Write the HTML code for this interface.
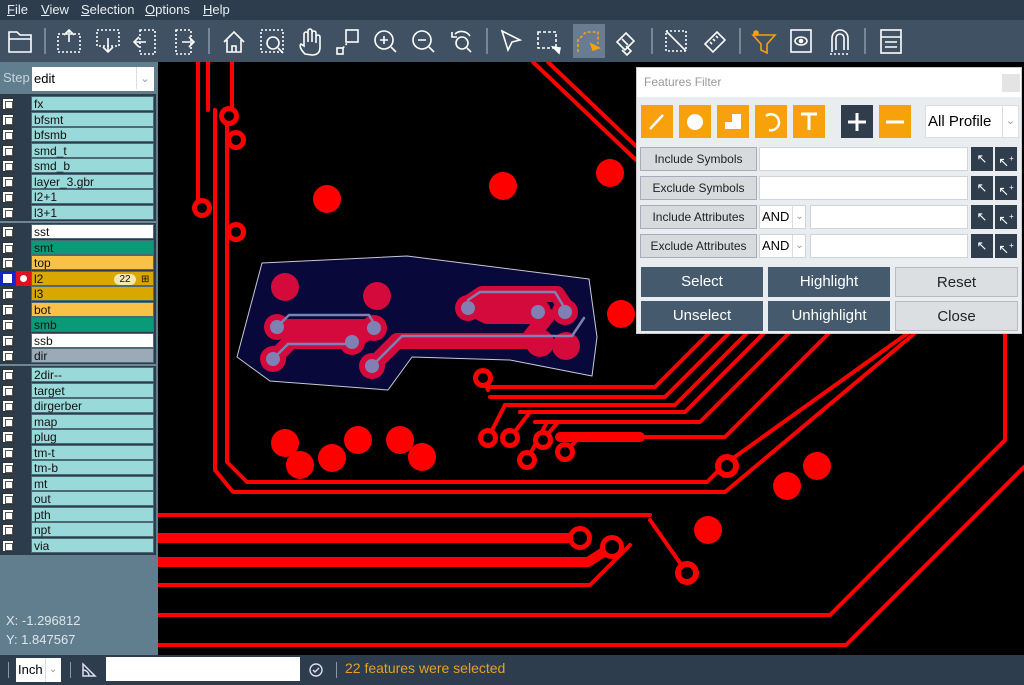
<!DOCTYPE html>
<html><head><meta charset="utf-8"><style>
*{margin:0;padding:0;box-sizing:border-box}
body{width:1024px;height:685px;overflow:hidden;background:#000;font-family:"Liberation Sans",sans-serif;position:relative}
.abs{position:absolute}
#menu{left:0;top:0;width:1024px;height:20px;background:#2e3d4e;color:#e8eef2;font-size:13px}
#menu span{position:absolute;top:2px}
#menu u{text-decoration:underline}
#tb{left:0;top:20px;width:1024px;height:42px;background:#3f5163}
#left{left:0;top:62px;width:158px;height:593px;background:#617e8e}
#layers{left:0;top:94px;width:156px;height:461px;background:#2d3c4a}
.row{position:absolute;left:0;width:156px;height:15.5px}
.cb{position:absolute;left:2px;top:2px;width:12px;height:12px;background:#fff;border:1px solid #333}
.cb:after{content:"";position:absolute;left:2px;top:2px;width:6px;height:6px;border:1px solid #555}
.lb{position:absolute;left:31px;top:0;width:123px;height:15px;font-size:12px;line-height:15px;padding-left:2px;color:#111;border:1px solid #4a6a78}
#status{left:0;top:655px;width:1024px;height:30px;background:#2e3d4e}
#dlg{left:636px;top:67px;width:386px;height:267px;background:#e9edf0;border:1px solid #c8ccd0}
.ob{position:absolute;top:37px;width:32px;height:33px;background:#f7a20c}
.lbtn{position:absolute;left:3px;width:117px;height:24px;background:#d8dbde;border:1px solid #aab;font-size:12px;text-align:center;line-height:22px;color:#222}
.inp{position:absolute;height:24px;background:#fff;border:1px solid #d0d4d8}
.ib{position:absolute;width:22px;height:24px;background:#2f3d4c;color:#fff;font-size:13px;text-align:center;line-height:24px}
.bb{position:absolute;height:30px;font-size:15px;text-align:center;line-height:30px}
.dk{background:#465a6e;color:#fff}
.lt{background:#dcdfe2;color:#222;border:1px solid #bbb}
</style></head><body>
<div id="menu" class="abs">
<span style="left:7px"><u>F</u>ile</span><span style="left:41px"><u>V</u>iew</span><span style="left:81px"><u>S</u>election</span><span style="left:145px"><u>O</u>ptions</span><span style="left:203px"><u>H</u>elp</span>
</div>
<div id="tb" class="abs">
<div class="abs" style="left:573px;top:4px;width:32px;height:34px;background:#6a7d90"></div>
<svg class="abs" style="left:0;top:0" width="1024" height="42" fill="none" stroke="#fff" stroke-width="1.6">
<g stroke="#8596a6"><line x1="45" y1="8" x2="45" y2="34"/><line x1="209" y1="8" x2="209" y2="34"/><line x1="487" y1="8" x2="487" y2="34"/><line x1="652" y1="8" x2="652" y2="34"/><line x1="740" y1="8" x2="740" y2="34"/><line x1="865" y1="8" x2="865" y2="34"/></g>
<path d="M9 12h8l3 3h11v17H9z M9 19h22"/>
<g stroke-dasharray="2 2"><rect x="58" y="14" width="22" height="18"/><rect x="97" y="10" width="22" height="16"/><rect x="140" y="10" width="15" height="24"/><rect x="176" y="10" width="15" height="24"/><rect x="261" y="10" width="22" height="22"/></g>
<path d="M69 22v-12m-5 5l5-5 5 5"/><path d="M108 18v14m-5-5l5 5 5-5"/><path d="M146 22h-12m5-5l-5 5 5 5"/><path d="M182 22h12m-5-5l5 5-5 5"/>
<path d="M224 22l10-10 10 10M227 20v12h14V20M232 32v-6h4v6"/>
<circle cx="273" cy="23" r="6"/><path d="M278 28l5 5"/>
<path d="M305 34c-4-4-6-8-4-10l3 2V14a2 2 0 014 0v8-11a2 2 0 014 0v11-9a2 2 0 014 0v10-6a2 2 0 014 0v10c0 6-3 8-8 8z"/>
<rect x="346" y="10" width="12" height="12"/><rect x="337" y="28" width="6" height="6"/><path d="M343 28l5-6" stroke-dasharray="2 2"/>
<circle cx="384" cy="20" r="9"/><path d="M391 27l5 5M380 20h8M384 16v8"/>
<circle cx="422" cy="20" r="9"/><path d="M429 27l5 5M418 20h8"/>
<path d="M455 14a10 10 0 0115 2"/><circle cx="462" cy="23" r="6"/><path d="M467 28l4 4M452 12v5h5"/>
<path d="M502 11l18 9-8 2-4 8z"/>
<rect x="538" y="12" width="18" height="16" stroke-dasharray="3 2"/><path d="M553 27l6 6 1-5z" fill="#fff"/>
<g stroke="#f7a20c"><path d="M578 32V20l8-8h12v12" stroke-dasharray="3 2"/><path d="M591 24l8 4-6 2z" fill="#f7a20c"/></g>
<path d="M617 22l9-9 8 8-9 9zM622 19l6 6M626 26l5 5-4 4-5-5"/>
<rect x="666" y="11" width="20" height="20" stroke-dasharray="2 2"/><path d="M666 11l20 20"/>
<path d="M705 24l12-12 8 8-12 12zM710 22l2 2M713 19l2 2M716 16l2 2"/>
<g stroke="#f7a20c"><path d="M753 15h22l-8 9v9l-6-3v-6z"/><circle cx="756" cy="13" r="2" fill="#f7a20c"/></g>
<rect x="791" y="10" width="20" height="22"/><ellipse cx="801" cy="21" rx="6" ry="4"/><circle cx="801" cy="21" r="1.5" fill="#fff"/>
<path d="M832 32V18a8 8 0 0116 0v12M836 30V18a4 4 0 018 0v12" /><path d="M830 34h20" stroke-dasharray="2 2"/>
<rect x="881" y="10" width="20" height="23"/><path d="M881 17h20M885 22h12M885 27h12"/>
</svg>
</div>
<div id="left" class="abs">
<div class="abs" style="left:0;top:2px;width:32px;height:26px;color:#c8d4dc;font-size:13px;line-height:28px;padding-left:3px">Step</div>
<div class="abs" style="left:32px;top:5px;width:122px;height:24px;background:#fff;font-size:13px;line-height:24px;padding-left:2px">edit<span style="position:absolute;left:104px;top:0;width:17px;height:22px;border-left:1px solid #ddd;color:#999;text-align:center;font-size:11px">&#8964;</span></div>
<div class="abs" style="left:6px;top:549px;color:#dde6ea;font-size:13px;line-height:19px">X: -1.296812<br>Y: 1.847567</div>
</div>
<div id="layers" class="abs">
<div class="row" style="top:2px"><div class="cb"></div><div class="lb" style="background:#9ad9da">fx</div></div>
<div class="row" style="top:17.5px"><div class="cb"></div><div class="lb" style="background:#9ad9da">bfsmt</div></div>
<div class="row" style="top:33px"><div class="cb"></div><div class="lb" style="background:#9ad9da">bfsmb</div></div>
<div class="row" style="top:48.5px"><div class="cb"></div><div class="lb" style="background:#9ad9da">smd_t</div></div>
<div class="row" style="top:64px"><div class="cb"></div><div class="lb" style="background:#9ad9da">smd_b</div></div>
<div class="row" style="top:79.5px"><div class="cb"></div><div class="lb" style="background:#9ad9da">layer_3.gbr</div></div>
<div class="row" style="top:95px"><div class="cb"></div><div class="lb" style="background:#9ad9da">l2+1</div></div>
<div class="row" style="top:110.5px"><div class="cb"></div><div class="lb" style="background:#9ad9da">l3+1</div></div>
<div class="abs" style="left:0;top:127px;width:156px;height:2px;background:#6f8795"></div>
<div class="row" style="top:130px"><div class="cb"></div><div class="lb" style="background:#fff">sst</div></div>
<div class="row" style="top:145.5px"><div class="cb"></div><div class="lb" style="background:#0b9a78">smt</div></div>
<div class="row" style="top:161px"><div class="cb"></div><div class="lb" style="background:#f9c146">top</div></div>
<div class="row" style="top:176.5px"><div class="abs" style="left:0;top:0;width:15px;height:15px;background:#1228c0"></div><div class="abs" style="left:3px;top:3px;width:9px;height:9px;background:#fff"></div><div class="abs" style="left:16px;top:0;width:15px;height:15px;background:#e01020"></div><div class="abs" style="left:20px;top:4px;width:7px;height:7px;border-radius:50%;background:#fff"></div><div class="lb" style="background:#d9a800">l2<span style="position:absolute;left:82px;top:2px;width:22px;height:11px;border-radius:6px;background:#f4e8b0;font-size:10px;line-height:11px;text-align:center">22</span><span style="position:absolute;left:109px;top:0;font-size:10px">&#8862;</span></div></div>
<div class="row" style="top:192px"><div class="cb"></div><div class="lb" style="background:#d9a800">l3</div></div>
<div class="row" style="top:207.5px"><div class="cb"></div><div class="lb" style="background:#f9c146">bot</div></div>
<div class="row" style="top:223px"><div class="cb"></div><div class="lb" style="background:#0b9a78">smb</div></div>
<div class="row" style="top:238.5px"><div class="cb"></div><div class="lb" style="background:#fff">ssb</div></div>
<div class="row" style="top:254px"><div class="cb"></div><div class="lb" style="background:#9aaab6">dir</div></div>
<div class="abs" style="left:0;top:270px;width:156px;height:2px;background:#6f8795"></div>
<div class="row" style="top:273px"><div class="cb"></div><div class="lb" style="background:#9ad9da">2dir--</div></div>
<div class="row" style="top:288.5px"><div class="cb"></div><div class="lb" style="background:#9ad9da">target</div></div>
<div class="row" style="top:304px"><div class="cb"></div><div class="lb" style="background:#9ad9da">dirgerber</div></div>
<div class="row" style="top:319.5px"><div class="cb"></div><div class="lb" style="background:#9ad9da">map</div></div>
<div class="row" style="top:335px"><div class="cb"></div><div class="lb" style="background:#9ad9da">plug</div></div>
<div class="row" style="top:350.5px"><div class="cb"></div><div class="lb" style="background:#9ad9da">tm-t</div></div>
<div class="row" style="top:366px"><div class="cb"></div><div class="lb" style="background:#9ad9da">tm-b</div></div>
<div class="row" style="top:381.5px"><div class="cb"></div><div class="lb" style="background:#9ad9da">mt</div></div>
<div class="row" style="top:397px"><div class="cb"></div><div class="lb" style="background:#9ad9da">out</div></div>
<div class="row" style="top:412.5px"><div class="cb"></div><div class="lb" style="background:#9ad9da">pth</div></div>
<div class="row" style="top:428px"><div class="cb"></div><div class="lb" style="background:#9ad9da">npt</div></div>
<div class="row" style="top:443.5px"><div class="cb"></div><div class="lb" style="background:#9ad9da">via</div></div>
</div>
<svg class="abs" style="left:158px;top:62px" width="866" height="593" viewBox="158 62 866 593" fill="none" stroke-linejoin="round" stroke-linecap="round">
<g stroke="#ff0000" stroke-width="4">
<path d="M198 62V207"/><path d="M208 62V110"/>
<path d="M215 110V470l18 22h492l190-159"/><path d="M227 125V462l20 20h460l18-18 183-131"/>
<path d="M232 62V108"/>
<path d="M158 515h492"/><path d="M158 585h432l40-40"/><path d="M158 615h672l175-175V330"/><path d="M158 645h688l178-178"/>
<path d="M533 62l103 98"/><path d="M548 62l88 84"/>
<path d="M490 387H655L709 333"/><path d="M490 397H665L729 333"/><path d="M505 405H675L747 333"/><path d="M520 412H685L764 333"/><path d="M535 422H700L789 333"/><path d="M560 437H725L829 333"/>
<path d="M483 378l5 12M488 438l17-33M510 438l20-26M527 460l20-38M543 440l15-18M565 452l15-15"/>
<path d="M650 520l37 53M612 550l-22 12"/>
</g>
<g stroke="#ff0000" stroke-width="10"><path d="M158 538h420"/><path d="M158 562h430l22-14"/><path d="M560 437H640"/></g>
<g fill="#ff0000">
<circle cx="327" cy="199" r="14"/><circle cx="503" cy="186" r="14"/><circle cx="610" cy="173" r="14"/><circle cx="621" cy="314" r="14"/>
<circle cx="285" cy="443" r="14"/><circle cx="300" cy="465" r="14"/><circle cx="332" cy="458" r="14"/><circle cx="358" cy="440" r="14"/><circle cx="400" cy="440" r="14"/><circle cx="422" cy="457" r="14"/>
<circle cx="708" cy="530" r="14"/><circle cx="787" cy="486" r="14"/><circle cx="817" cy="466" r="14"/>
<circle cx="202" cy="208" r="10"/><circle cx="229" cy="116" r="10"/><circle cx="236" cy="140" r="10"/><circle cx="236" cy="232" r="10"/>
<circle cx="483" cy="378" r="10"/><circle cx="488" cy="438" r="10"/><circle cx="510" cy="438" r="10"/><circle cx="527" cy="460" r="10"/><circle cx="543" cy="440" r="10"/><circle cx="565" cy="452" r="10"/><circle cx="580" cy="538" r="12"/><circle cx="612" cy="547" r="12"/><circle cx="687" cy="573" r="12"/><circle cx="727" cy="466" r="12"/>
</g>
<g fill="#000"><circle cx="202" cy="208" r="5"/><circle cx="229" cy="116" r="5"/><circle cx="236" cy="140" r="5"/><circle cx="236" cy="232" r="5"/><circle cx="483" cy="378" r="5"/><circle cx="488" cy="438" r="5"/><circle cx="510" cy="438" r="5"/><circle cx="527" cy="460" r="5"/><circle cx="543" cy="440" r="5"/><circle cx="565" cy="452" r="5"/><circle cx="580" cy="538" r="7"/><circle cx="612" cy="547" r="7"/><circle cx="687" cy="573" r="6"/><circle cx="727" cy="466" r="6"/></g>
<polygon points="262,263 407,256 589,279 597,337 592,376 510,360 412,357 388,390 270,381 237,357" fill="#08083a" stroke="#c8c8d8" stroke-width="1"/>
<g fill="#d40a3c"><circle cx="285" cy="287" r="14"/><circle cx="377" cy="296" r="14"/><circle cx="277" cy="327" r="13"/><circle cx="374" cy="328" r="13"/><circle cx="352" cy="342" r="13"/><circle cx="273" cy="359" r="13"/><circle cx="372" cy="366" r="13"/><circle cx="468" cy="308" r="13"/><circle cx="538" cy="312" r="13"/><circle cx="565" cy="312" r="13"/><circle cx="540" cy="343" r="14"/><circle cx="566" cy="346" r="14"/></g>
<g stroke="#d40a3c" stroke-width="16"><path d="M277 327h97l-20 15M273 359l18-18h60M372 366l25-25h130l20-25h-60l-20-10h60l20 10"/><path d="M470 302l12-8h75l10 15"/></g>
<g stroke="#8080b4" stroke-width="2.5"><path d="M277 327l12-12h80l7 12M273 359l15-15h62M372 366l20-20 10-10h170l12-18M468 300l12-8h75l12 20"/></g>
<g fill="#8080b4"><circle cx="277" cy="327" r="7"/><circle cx="374" cy="328" r="7"/><circle cx="352" cy="342" r="7"/><circle cx="273" cy="359" r="7"/><circle cx="372" cy="366" r="7"/><circle cx="468" cy="308" r="7"/><circle cx="538" cy="312" r="7"/><circle cx="565" cy="312" r="7"/></g>
</svg>
<div id="dlg" class="abs">
<div class="abs" style="left:0;top:0;width:384px;height:29px;background:#fff;color:#999;font-size:12px;line-height:28px;padding-left:7px">Features Filter<div class="abs" style="left:365px;top:6px;width:18px;height:18px;background:#e4e4e4"></div></div>
<div class="ob" style="left:4px"><svg width="32" height="33"><path d="M9 24L22 10" stroke="#fff" stroke-width="2.5"/></svg></div>
<div class="ob" style="left:42px"><svg width="32" height="33"><circle cx="16" cy="17" r="8" fill="#fff"/></svg></div>
<div class="ob" style="left:80px"><svg width="32" height="33"><path d="M8 24V17h7V9h9v15z" fill="#fff"/></svg></div>
<div class="ob" style="left:118px"><svg width="32" height="33"><path d="M11 11a8 8 0 113 14" stroke="#fff" stroke-width="2.5" fill="none"/></svg></div>
<div class="ob" style="left:156px"><svg width="32" height="33"><path d="M8 9h16M16 9v16" stroke="#fff" stroke-width="3"/></svg></div>
<div class="ob" style="left:204px;background:#2f3d4c"><svg width="32" height="33"><path d="M7 17h18M16 8v18" stroke="#fff" stroke-width="3"/></svg></div>
<div class="ob" style="left:242px"><svg width="32" height="33"><path d="M7 17h18" stroke="#fff" stroke-width="3"/></svg></div>
<div class="abs" style="left:288px;top:37px;width:94px;height:33px;background:#fff;border:1px solid #ddd;font-size:15px;line-height:31px;padding-left:2px">All Profile<span style="position:absolute;left:76px;top:0;width:16px;height:31px;border-left:1px solid #ddd;color:#999;font-size:11px;text-align:center">&#8964;</span></div>
<div class="lbtn" style="top:79px">Include Symbols</div><div class="inp" style="left:122px;top:79px;width:209px"></div>
<div class="lbtn" style="top:108px">Exclude Symbols</div><div class="inp" style="left:122px;top:108px;width:209px"></div>
<div class="lbtn" style="top:137px">Include Attributes</div><div class="inp" style="left:122px;top:137px;width:47px;font-size:13px;line-height:22px;padding-left:2px">AND<span style="color:#999;font-size:10px;position:absolute;left:32px;top:0;border-left:1px solid #ddd;width:14px;text-align:center">&#8964;</span></div><div class="inp" style="left:173px;top:137px;width:158px"></div>
<div class="lbtn" style="top:166px">Exclude Attributes</div><div class="inp" style="left:122px;top:166px;width:47px;font-size:13px;line-height:22px;padding-left:2px">AND<span style="color:#999;font-size:10px;position:absolute;left:32px;top:0;border-left:1px solid #ddd;width:14px;text-align:center">&#8964;</span></div><div class="inp" style="left:173px;top:166px;width:158px"></div>
<div class="ib" style="left:334px;top:79px">&#8598;</div><div class="ib" style="left:358px;top:79px">&#8598;<sup style="font-size:8px">+</sup></div>
<div class="ib" style="left:334px;top:108px">&#8598;</div><div class="ib" style="left:358px;top:108px">&#8598;<sup style="font-size:8px">+</sup></div>
<div class="ib" style="left:334px;top:137px">&#8598;</div><div class="ib" style="left:358px;top:137px">&#8598;<sup style="font-size:8px">+</sup></div>
<div class="ib" style="left:334px;top:166px">&#8598;</div><div class="ib" style="left:358px;top:166px">&#8598;<sup style="font-size:8px">+</sup></div>
<div class="bb dk" style="left:4px;top:199px;width:122px">Select</div>
<div class="bb dk" style="left:131px;top:199px;width:122px">Highlight</div>
<div class="bb lt" style="left:258px;top:199px;width:123px">Reset</div>
<div class="bb dk" style="left:4px;top:233px;width:122px">Unselect</div>
<div class="bb dk" style="left:131px;top:233px;width:122px">Unhighlight</div>
<div class="bb lt" style="left:258px;top:233px;width:123px">Close</div>
</div>
<div id="status" class="abs">
<div class="abs" style="left:8px;top:7px;width:1px;height:16px;background:#8596a6"></div>
<div class="abs" style="left:16px;top:3px;width:45px;height:24px;background:#fff;font-size:13px;line-height:24px;padding-left:2px">Inch<span style="position:absolute;left:29px;top:0;width:15px;height:24px;border-left:1px solid #ddd;color:#999;font-size:10px;text-align:center">&#8964;</span></div>
<div class="abs" style="left:70px;top:7px;width:1px;height:16px;background:#8596a6"></div>
<svg class="abs" style="left:80px;top:6px" width="18" height="18" fill="none" stroke="#dde" stroke-width="1.5"><path d="M3 3v12h12zM3 9a6 6 0 016 6"/></svg>
<div class="abs" style="left:106px;top:2px;width:194px;height:24px;background:#fff"></div>
<svg class="abs" style="left:308px;top:7px" width="16" height="16" fill="none" stroke="#dde" stroke-width="1.4"><circle cx="8" cy="8" r="6"/><path d="M5 8l2 2 4-4"/></svg>
<div class="abs" style="left:336px;top:7px;width:1px;height:16px;background:#8596a6"></div>
<div class="abs" style="left:345px;top:5px;color:#e8a020;font-size:14px">22 features were selected</div>
</div>
</body></html>
